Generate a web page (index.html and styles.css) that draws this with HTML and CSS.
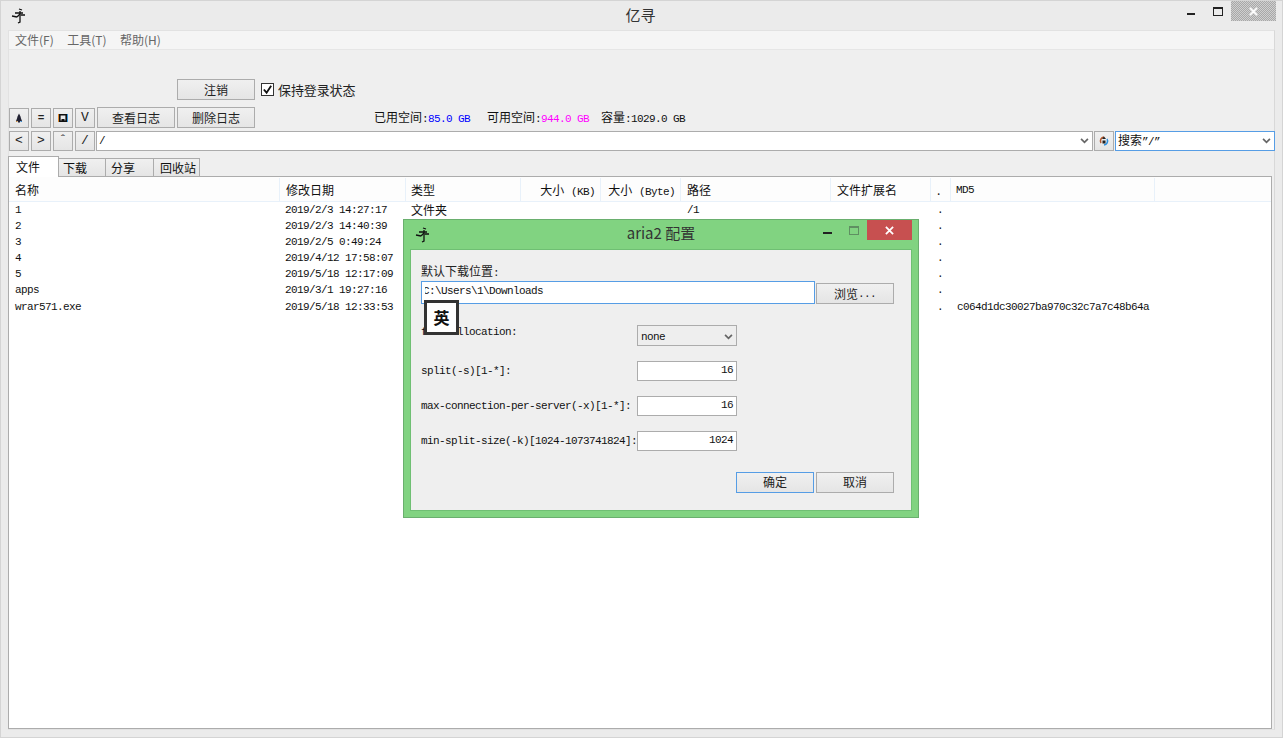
FILE: index.html
```html
<!DOCTYPE html>
<html lang="zh">
<head>
<meta charset="utf-8">
<title>亿寻</title>
<link rel="stylesheet" href="styles.css">
</head>
<body>
<div class="window">
  <div class="titlebar">
    <svg class="app-icon" viewBox="0 0 16 16"><path d="M8 1l3 1M4 5h8M9 3v3M9 6l-3 3M1 8l5 1M8 7h6M9 8v6l-2 1" fill="none" stroke="#111" stroke-width="1.300"/></svg>
    <div class="title">亿寻</div>
    <div class="caption">
      <span class="cap-min"></span>
      <span class="cap-max"></span>
      <span class="cap-close"><svg viewBox="0 0 10 10"><path d="M1 1l8 8M9 1l-8 8" stroke="#fff" stroke-width="2"/></svg></span>
    </div>
  </div>
  <div class="client">
    <div class="menubar">
      <span class="menu">文件(F)</span>
      <span class="menu">工具(T)</span>
      <span class="menu">帮助(H)</span>
    </div>
    <div class="login-row">
      <button class="btn btn-wide">注销</button>
      <label class="check"><span class="checkbox"><svg viewBox="0 0 12 12"><path d="M2 6l3 3.5L10 2" fill="none" stroke="#111" stroke-width="2"/></svg></span>保持登录状态</label>
    </div>
    <div class="tool-row">
      <button class="btn btn-sq"><svg class="ico" viewBox="0 0 10 10"><path d="M5 0.500l1.500 3 .5 2 1 2.500H6v1.500H4V8H2l1-2.500 .5-2z" fill="#223"/><path d="M2 8h1.500v1H2z" fill="#c98a3a"/><path d="M6.500 8H8v1H6.500z" fill="#3a8ad0"/></svg></button>
      <button class="btn btn-sq btn-eq">=</button>
      <button class="btn btn-sq"><svg class="ico" viewBox="0 0 10 10"><path d="M0 1h1v8H0z" fill="#e08a30"/><path d="M9 1h1v8H9z" fill="#3a9ae0"/><path d="M1.800 1.800h6.400v6.400H1.800z" fill="none" stroke="#111" stroke-width="1.600"/><path d="M3.500 6h3v2h-3z" fill="#111"/></svg></button>
      <button class="btn btn-sq">V</button>
      <button class="btn btn-wide">查看日志</button>
      <button class="btn btn-wide">删除日志</button>
      <div class="stats">
        <span class="stat stat-used">已用空间<span class="mono">:</span><span class="mono blue">85.0 GB</span></span>
        <span class="stat stat-free">可用空间<span class="mono">:</span><span class="mono pink">944.0 GB</span></span>
        <span class="stat">容量<span class="mono">:1029.0 GB</span></span>
      </div>
    </div>
    <div class="addr-row">
      <button class="btn btn-sq">&lt;</button>
      <button class="btn btn-sq">&gt;</button>
      <button class="btn btn-sq">ˆ</button>
      <button class="btn btn-sq">/</button>
      <div class="combo combo-path"><span class="mono">/</span><svg class="chev" viewBox="0 0 10 7"><path d="M1 1l4 4 4-4" fill="none" stroke="#666" stroke-width="2"/></svg></div>
      <button class="btn btn-sq btn-go"><svg class="ico" viewBox="0 0 10 10"><path d="M5 1A4 4 0 0 0 2 7" fill="none" stroke="#b4552a" stroke-width="1.500"/><path d="M5 9a4 4 0 0 0 3-6" fill="none" stroke="#2a8fe0" stroke-width="1.500"/><path d="M5 0.500l2 2.500H3zM3.500 4.500h3v3h-3z" fill="#222"/></svg></button>
      <div class="combo combo-search"><span>搜索<span class="mono">”/”</span></span><svg class="chev" viewBox="0 0 10 7"><path d="M1 1l4 4 4-4" fill="none" stroke="#666" stroke-width="2"/></svg></div>
    </div>
    <div class="tabs">
      <div class="tab tab-on">文件</div>
      <div class="tab tab-dl">下载</div>
      <div class="tab tab-share">分享</div>
      <div class="tab tab-bin">回收站</div>
    </div>
    <div class="table">
      <div class="row head">
        <div class="c c1">名称</div><div class="c c2">修改日期</div><div class="c c3">类型</div>
        <div class="c c4 right">大小 <span class="mono paren">(KB)</span></div><div class="c c5 right">大小 <span class="mono paren">(Byte)</span></div>
        <div class="c c6">路径</div><div class="c c7">文件扩展名</div><div class="c c8">.</div><div class="c c9 mono">MD5</div><div class="c c10"></div>
      </div>
      <div class="row data"><div class="c c1 mono">1</div><div class="c c2 mono">2019/2/3 14:27:17</div><div class="c c3">文件夹</div><div class="c c4"></div><div class="c c5"></div><div class="c c6 mono">/1</div><div class="c c7"></div><div class="c c8 mono">.</div></div>
      <div class="row data"><div class="c c1 mono">2</div><div class="c c2 mono">2019/2/3 14:40:39</div><div class="c c3"></div><div class="c c4"></div><div class="c c5"></div><div class="c c6"></div><div class="c c7"></div><div class="c c8 mono">.</div></div>
      <div class="row data"><div class="c c1 mono">3</div><div class="c c2 mono">2019/2/5 0:49:24</div><div class="c c3"></div><div class="c c4"></div><div class="c c5"></div><div class="c c6"></div><div class="c c7"></div><div class="c c8 mono">.</div></div>
      <div class="row data"><div class="c c1 mono">4</div><div class="c c2 mono">2019/4/12 17:58:07</div><div class="c c3"></div><div class="c c4"></div><div class="c c5"></div><div class="c c6"></div><div class="c c7"></div><div class="c c8 mono">.</div></div>
      <div class="row data"><div class="c c1 mono">5</div><div class="c c2 mono">2019/5/18 12:17:09</div><div class="c c3"></div><div class="c c4"></div><div class="c c5"></div><div class="c c6"></div><div class="c c7"></div><div class="c c8 mono">.</div></div>
      <div class="row data"><div class="c c1 mono">apps</div><div class="c c2 mono">2019/3/1 19:27:16</div><div class="c c3"></div><div class="c c4"></div><div class="c c5"></div><div class="c c6"></div><div class="c c7"></div><div class="c c8 mono">.</div></div>
      <div class="row data"><div class="c c1 mono">wrar571.exe</div><div class="c c2 mono">2019/5/18 12:33:53</div><div class="c c3"></div><div class="c c4"></div><div class="c c5"></div><div class="c c6"></div><div class="c c7"></div><div class="c c8 mono">.</div><div class="c c9 mono">c064d1dc30027ba970c32c7a7c48b64a</div></div>
    </div>
  </div>
</div>

<div class="dialog">
  <div class="dlg-title">
    <svg class="dlg-icon" viewBox="0 0 16 16"><path d="M8 1l3 1M4 5h8M9 3v3M9 6l-3 3M1 8l5 1M8 7h6M9 8v6l-2 1" fill="none" stroke="#111" stroke-width="1.300"/></svg>
    <div class="dlg-name">aria2 配置</div>
    <span class="dlg-min"></span>
    <span class="dlg-max"></span>
    <span class="dlg-close"><svg viewBox="0 0 10 10"><path d="M1 1l8 8M9 1l-8 8" stroke="#fff" stroke-width="2"/></svg></span>
  </div>
  <div class="dlg-body">
    <div class="dlg-label">默认下载位置<span class="mono">:</span></div>
    <div class="path-row">
      <div class="path-input mono">C:\Users\1\Downloads</div>
      <button class="btn btn-wide btn-browse">浏览<span class="mono">...</span></button>
    </div>
    <div class="form-row row-alloc"><span class="mono flabel">file-allocation:</span><div class="field select mono">none<svg class="chev" viewBox="0 0 10 7"><path d="M1 1l4 4 4-4" fill="none" stroke="#666" stroke-width="2"/></svg></div></div>
    <div class="form-row"><span class="mono flabel">split(-s)[1-*]:</span><div class="field mono num">16</div></div>
    <div class="form-row"><span class="mono flabel">max-connection-per-server(-x)[1-*]:</span><div class="field mono num">16</div></div>
    <div class="form-row"><span class="mono flabel">min-split-size(-k)[1024-1073741824]:</span><div class="field mono num">1024</div></div>
    <div class="dlg-actions">
      <button class="btn btn-wide btn-ok">确定</button>
      <button class="btn btn-wide btn-cancel">取消</button>
    </div>
  </div>
  <div class="ime">英</div>
</div>
</body>
</html>
```
FILE: styles.css
```css
* { box-sizing: border-box; }
html, body { margin: 0; padding: 0; }
body {
  width: 1283px; height: 738px; overflow: hidden; position: relative;
  font: 12px/16px "Noto Sans CJK SC", "Liberation Sans", sans-serif; color: #111;
}
.mono { font-family: "Liberation Mono", "Noto Sans CJK SC", monospace; font-size: 11px; letter-spacing: -0.6px; }
.window {
  width: 1283px; height: 738px; background: #ebebeb;
  border: 1px solid #d4d4d4; padding: 0 7px 7px 7px; display: flex; flex-direction: column;
}
.titlebar { height: 29px; flex: none; display: flex; align-items: flex-start; position: relative; }
.app-icon { width: 16px; height: 16px; margin: 7px 0 0 3px; flex: none; }
.title { position: absolute; left: 0; right: 2px; top: 4px; text-align: center; font-size: 15px; line-height: 20px; color: #333; }
.caption { position: absolute; right: 0; top: 0; display: flex; }
.cap-min { position: absolute; right: 80px; top: 12px; width: 8px; height: 2px; background: #222; }
.cap-max { position: absolute; right: 52px; top: 6px; width: 10px; height: 9px; border: 1px solid #222; border-top-width: 2px; }
.cap-close {
  width: 45px; height: 20px; display: flex; align-items: center; justify-content: center;
  background: repeating-conic-gradient(#a8a8a8 0 25%, #cfcfcf 0 50%) 0 0 / 2px 2px; position: absolute; right: -1px; top: 0;
}
.cap-close svg { width: 9px; height: 9px; }
.client { flex: 1; background: #efefef; border: 1px solid #e2e2e2; border-right-color: #d8d8d8; display: flex; flex-direction: column; min-height: 0; }
.menubar { height: 19px; flex: none; background: #f5f5f5; border-bottom: 1px solid #e6e6e6; display: flex; padding-left: 6px; gap: 13.5px; align-items: center; color: #666; }
.menu { white-space: nowrap; }
.login-row { flex: none; height: 21px; margin-top: 29px; padding-left: 168px; display: flex; align-items: center; gap: 6px; }
.btn {
  font: inherit; color: #222; background: linear-gradient(#f0f0f0, #e5e5e5); border: 1px solid #acacac;
  padding: 0; height: 20px; display: flex; align-items: center; justify-content: center; flex: none;
}
.btn-wide { width: 78px; height: 21px; }
.btn-sq { width: 20px; height: 20px; font-family: "Liberation Mono", monospace; font-size: 13px; }
.btn-eq { font-size: 11px; font-weight: 700; }
.ico { width: 10px; height: 10px; }
.check { display: flex; align-items: center; gap: 4px; color: #222; white-space: nowrap; font-size: 13px; letter-spacing: -0.1px; }
.checkbox { width: 13px; height: 13px; background: #fff; border: 1px solid #333; display: flex; align-items: center; justify-content: center; }
.checkbox svg { width: 11px; height: 11px; }
.tool-row { flex: none; height: 21px; margin-top: 7px; display: flex; align-items: center; gap: 2px; }
.addr-row { flex: none; height: 20px; margin-top: 3px; display: flex; align-items: center; gap: 2px; }
.stats { display: flex; margin-left: 117px; white-space: nowrap; color: #111; }
.stat-used { width: 113px; }
.stat-free { width: 114px; }
.blue { color: #0000ff; }
.pink { color: #ff00ff; }
.combo { background: #fff; border: 1px solid #acacac; height: 20px; display: flex; align-items: center; justify-content: space-between; padding: 0 3px 0 2px; flex: none; }
.combo-path { width: 997px; margin: 0 -1px; }
.combo-search { width: 160px; border-color: #569de5; margin-left: -1px; }
.chev { width: 9px; height: 6px; flex: none; }
.tabs { flex: none; height: 21px; margin-top: 4px; display: flex; align-items: flex-end; position: relative; top: 1px; z-index: 1; }
.tab { height: 19px; background: linear-gradient(#f0f0f0, #e5e5e5); border: 1px solid #acacac; display: flex; align-items: center; padding-left: 4px; margin-left: -1px; }
.tab-on { height: 21px; width: 51px; background: #fff; border-bottom: 0; padding-left: 7px; }
.tab-dl { width: 48px; }
.tab-share { width: 49px; padding-left: 5px; }
.tab-bin { width: 47px; padding-left: 6px; }
.table { flex: 1; background: #fff; border: 1px solid #acacac; margin-right: 2px; min-height: 0; margin-left: -1px; }
.row { display: flex; }
.head { height: 25px; padding-top: 1px; background: #fdfdfd; border-bottom: 1px solid #e8f1fa; align-items: stretch; }
.head .c { border-right: 1px solid #e8f1fa; line-height: 24px; padding-left: 6px; }
.head .c3 { padding-left: 5px; }
.head .c9 { padding-left: 5px; }
.data { height: 16.1px; line-height: 16px; }
.data .c { padding-left: 6px; white-space: nowrap; }
.data .c2 { padding-left: 5px; }
.data .c3 { padding-left: 5px; }
.c { flex: none; }
.head .right { text-align: right; padding-right: 5px; padding-left: 0; }
.paren { margin-left: 4px; }
.c1 { width: 271px; }
.c2 { width: 126px; }
.c3 { width: 115px; }
.c4 { width: 80px; }
.c5 { width: 80px; }
.c6 { width: 150px; }
.c7 { width: 100px; }
.c8 { width: 20px; }
.c9 { width: 204px; }
.c10 { flex: 1; }
.head .c10 { border-right: 0; }
.dialog {
  position: absolute; left: 403px; top: 219px; width: 516px; height: 299px;
  background: #81d381; border: 1px solid #6aaf6e;
}
.dlg-title { height: 29px; position: relative; }
.dlg-icon { position: absolute; left: 11px; top: 7px; width: 16px; height: 16px; }
.dlg-name { position: absolute; left: 0; right: 0; top: 3px; text-align: center; font-size: 15px; line-height: 20px; color: #333; }
.dlg-min { position: absolute; left: 419px; top: 12px; width: 9px; height: 2px; background: #222; }
.dlg-max { position: absolute; left: 445px; top: 6px; width: 10px; height: 9px; border: 1px solid #5f8f62; border-top-width: 2px; }
.dlg-close { position: absolute; left: 463px; top: 0; width: 45px; height: 20px; background: #c75050; display: flex; align-items: center; justify-content: center; }
.dlg-close svg { width: 9px; height: 9px; }
.dlg-body { position: absolute; left: 6px; top: 29px; width: 502px; height: 262px; background: #efefef; border: 1px solid #6fbf73; padding: 13px 10px 0 10px; }
.dlg-label { height: 16px; line-height: 16px; color: #222; }
.path-row { display: flex; align-items: flex-end; margin-top: 2px; gap: 1px; height: 23px; }
.path-input { width: 394px; height: 23px; background: #fff; border: 1px solid #569de5; line-height: 19px; padding-left: 1px; position: relative; }
.path-input::before { content: ""; position: absolute; left: 1px; top: 3px; width: 2px; height: 14px; background: #fff; }
.form-row { display: flex; align-items: center; justify-content: space-between; width: 316px; height: 21px; margin-top: 14px; white-space: nowrap; }
.row-alloc { margin-top: 21px; }
.row-alloc .flabel { margin-bottom: 7px; }
.flabel { display: block; }
.field { width: 100px; height: 20px; background: #fff; border: 1px solid #acacac; flex: none; display: flex; align-items: center; padding: 0 3px; }
.num { justify-content: flex-end; padding-bottom: 2px; }
.select { background: #eeeeee; justify-content: space-between; height: 21px; padding-top: 2px; }
.dlg-actions { display: flex; gap: 2px; margin-top: 21px; padding-left: 315px; }
.btn-ok { border-color: #569de5; }
.btn-ok, .btn-cancel { padding-bottom: 1px; }
.ime {
  position: absolute; left: 20px; top: 80px; width: 35px; height: 35px; background: #fff; border: 3px solid #333;
  font-weight: 700; font-size: 16px; line-height: 29px; text-align: center; color: #111;
}
```
